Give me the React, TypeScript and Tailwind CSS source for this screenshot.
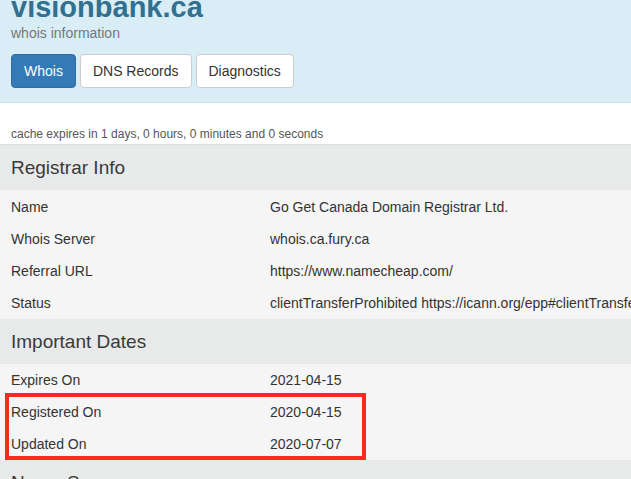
import React from 'react';

type Row = { label: string; value: string };

const registrar: Row[] = [
  { label: 'Name', value: 'Go Get Canada Domain Registrar Ltd.' },
  { label: 'Whois Server', value: 'whois.ca.fury.ca' },
  { label: 'Referral URL', value: 'https://www.namecheap.com/' },
  { label: 'Status', value: 'clientTransferProhibited https://icann.org/epp#clientTransferProhibited' },
];

const dates: Row[] = [
  { label: 'Expires On', value: '2021-04-15' },
  { label: 'Registered On', value: '2020-04-15' },
  { label: 'Updated On', value: '2020-07-07' },
];

function SectionTitle({ title }: { title: string }) {
  return (
    <div className="h-[45px] flex items-center px-[11px] bg-[#e8e9e9]">
      <h2 className="text-[19px] leading-none text-[#3a3a3a] whitespace-nowrap">{title}</h2>
    </div>
  );
}

function Rows({ rows }: { rows: Row[] }) {
  return (
    <div className="bg-[#f5f5f5]">
      {rows.map((r) => (
        <div key={r.label} className="h-[32px] flex items-center px-[11px] text-[14px] text-[#333] whitespace-nowrap">
          <div className="w-[259px] shrink-0">{r.label}</div>
          <div>{r.value}</div>
        </div>
      ))}
    </div>
  );
}

export default function App() {
  return (
    <div className="relative w-full h-[479px] overflow-hidden bg-white font-['Liberation_Sans',Arial,sans-serif] text-[#333]">
      {/* Header */}
      <header className="h-[103px] flex flex-col px-[11px] bg-[#d9edf7] border-b border-[#bce8f1]">
        <h1 className="-mt-[7px] text-[29px] font-bold leading-[29px] text-[#31708f] whitespace-nowrap">visionbank.ca</h1>
        <p className="mt-px text-[14px] leading-[20px] text-[#777]">whois information</p>
        <div className="mt-[11px] flex gap-[4px]">
          <button className="h-[34px] px-[12px] rounded-[4px] border border-[#2e6da4] bg-[#337ab7] text-white text-[14px]">Whois</button>
          <button className="h-[34px] px-[12px] rounded-[4px] border border-[#ccc] bg-white text-[#333] text-[14px]">DNS Records</button>
          <button className="h-[34px] px-[12px] rounded-[4px] border border-[#ccc] bg-white text-[#333] text-[14px]">Diagnostics</button>
        </div>
      </header>

      <div className="h-[42px] flex items-end px-[11px] pb-[2px] border-b border-[#dddddd]">
        <span className="text-[12px] leading-[16px] text-[#555] whitespace-nowrap">cache expires in 1 days, 0 hours, 0 minutes and 0 seconds</span>
      </div>

      <SectionTitle title="Registrar Info" />
      <div className="pt-px bg-[#f5f5f5]">
        <Rows rows={registrar} />
      </div>

      <SectionTitle title="Important Dates" />
      <Rows rows={dates} />

      <SectionTitle title="Name Servers" />

      {/* annotation */}
      <div className="absolute left-[5px] top-[393px] w-[361px] h-[67px] border-[4px] border-[#fb2a1e] pointer-events-none" />
    </div>
  );
}
